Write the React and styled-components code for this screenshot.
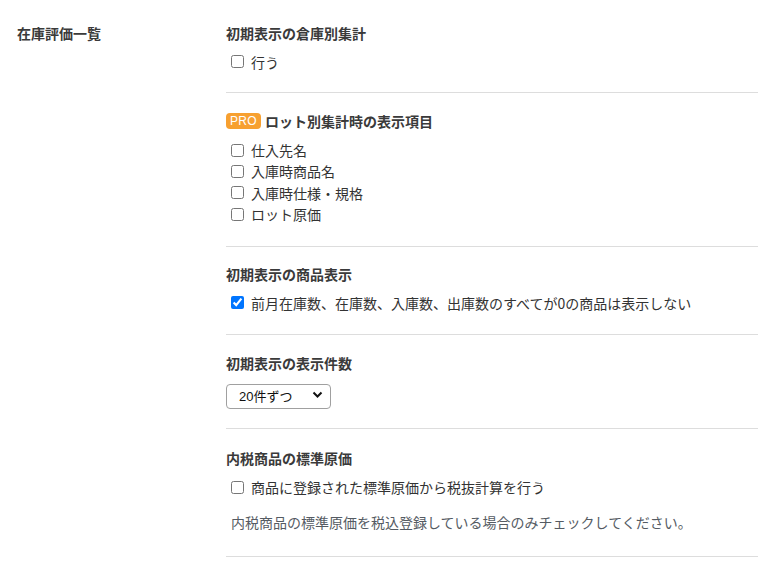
import React from 'react';
import styled, { createGlobalStyle } from 'styled-components';

const GlobalStyle = createGlobalStyle`
body {
    margin: 0;
    background: #fff;
    font-family: "Noto Sans CJK JP", "Noto Sans", "Liberation Sans", sans-serif;
    color: #333;
}
`;

const Page = styled.div`
display: flex;
padding: 4px 0 0 17px;
`;

const SideLabel = styled.div`
width: 209px;
flex-shrink: 0;
padding-top: 20px;
font-size: 14px;
font-weight: bold;
line-height: 18px;
color: #3a3a3a;
`;

const Content = styled.div`
flex: 1;
`;

const Section = styled.div`
padding: ${props => props.$top || 20}px 0 ${props => props.$bottom || 20}px;
border-bottom: 1px solid #ddd;
`;

const Heading = styled.h3`
display: flex;
align-items: center;
margin: 0 0 9px;
font-size: 14px;
font-weight: bold;
line-height: 18px;
color: #3a3a3a;
`;

const ProBadge = styled.span`
display: inline-block;
background: #f7a030;
color: #fff;
font-family: "Liberation Sans", sans-serif;
font-size: 12px;
font-weight: normal;
line-height: 16px;
padding: 0 4px;
border-radius: 4px;
margin-right: 4px;
letter-spacing: 0.3px;
`;

const CheckRow = styled.label`
display: flex;
align-items: center;
height: 21.4px;
font-size: 14px;
color: #333;

input {
    width: 13px;
    height: 13px;
    margin: 0 7px 0 5px;
}
`;

const Note = styled.p`
margin: 15px 0 4px 5px;
font-size: 14px;
line-height: 19px;
color: #555b63;
`;

const SelectWrap = styled.div`
position: relative;
width: 105px;
height: 25px;
margin-top: 10px;

svg {
    position: absolute;
    right: 8px;
    top: 9px;
    pointer-events: none;
}
`;

const Select = styled.select`
appearance: none;
width: 100%;
height: 100%;
border: 1px solid #a0a0a0;
border-radius: 4px;
background: #fff;
padding: 0 0 0 12px;
font-family: "Liberation Sans", "Noto Sans CJK JP", sans-serif;
font-size: 13px;
color: #111;
`;

function Check({ label, checked }) {
    return (
        <CheckRow>
            <input type="checkbox" defaultChecked={checked} />
            {label}
        </CheckRow>
    );
}

export default function App() {
    return (
        <>
            <GlobalStyle />
            <Page>
                <SideLabel>在庫評価一覧</SideLabel>
                <Content>
                    <Section>
                        <Heading>初期表示の倉庫別集計</Heading>
                        <Check label="行う" />
                    </Section>
                    <Section $top={19} $bottom={21}>
                        <Heading><ProBadge>PRO</ProBadge>ロット別集計時の表示項目</Heading>
                        <Check label="仕入先名" />
                        <Check label="入庫時商品名" />
                        <Check label="入庫時仕様・規格" />
                        <Check label="ロット原価" />
                    </Section>
                    <Section $top={18} $bottom={21}>
                        <Heading>初期表示の商品表示</Heading>
                        <Check label="前月在庫数、在庫数、入庫数、出庫数のすべてが0の商品は表示しない" checked />
                    </Section>
                    <Section $top={19} $bottom={21}>
                        <Heading>初期表示の表示件数</Heading>
                        <SelectWrap>
                            <Select defaultValue="20">
                                <option value="20">20件ずつ</option>
                                <option value="50">50件ずつ</option>
                                <option value="100">100件ずつ</option>
                            </Select>
                            <svg width="11" height="7" viewBox="0 0 11 7">
                                <path d="M1.5 1.5 L5.5 5.5 L9.5 1.5" fill="none" stroke="#111" strokeWidth="2" />
                            </svg>
                        </SelectWrap>
                    </Section>
                    <Section>
                        <Heading>内税商品の標準原価</Heading>
                        <Check label="商品に登録された標準原価から税抜計算を行う" />
                        <Note>内税商品の標準原価を税込登録している場合のみチェックしてください。</Note>
                    </Section>
                </Content>
            </Page>
        </>
    );
}
